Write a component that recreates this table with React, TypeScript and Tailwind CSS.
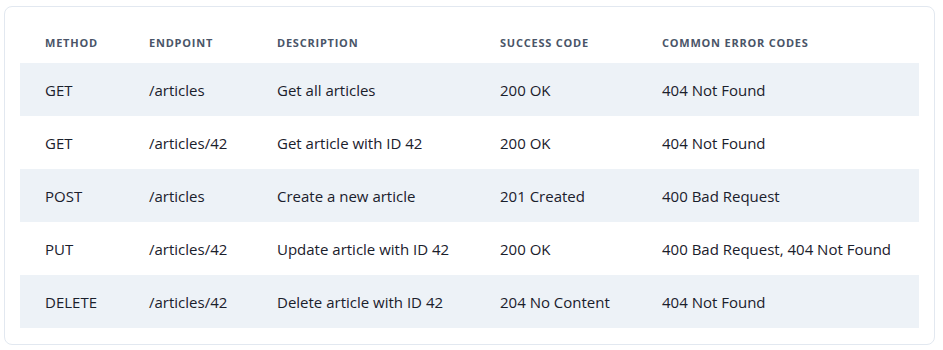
const rows = [
  ["GET", "/articles", "Get all articles", "200 OK", "404 Not Found"],
  ["GET", "/articles/42", "Get article with ID 42", "200 OK", "404 Not Found"],
  ["POST", "/articles", "Create a new article", "201 Created", "400 Bad Request"],
  ["PUT", "/articles/42", "Update article with ID 42", "200 OK", "400 Bad Request, 404 Not Found"],
  ["DELETE", "/articles/42", "Delete article with ID 42", "204 No Content", "404 Not Found"],
];

const headers = ["Method", "Endpoint", "Description", "Success Code", "Common Error Codes"];
const widths = ["w-[104px]", "w-[128px]", "w-[223px]", "w-[162px]", ""];

export default function App() {
  return (
    <div className="bg-white w-[943px] h-[350px] pt-[6px] pl-[4px]" style={{ fontFamily: '"Open Sans", sans-serif' }}>
      <div className="w-[931px] border border-[#e2e8f0] rounded-lg px-[15px] pt-[15px] pb-[16px]">
        <table className="w-full table-fixed border-collapse text-left">
          <thead>
            <tr className="h-[41px]">
              {headers.map((h, i) => (
                <th
                  key={h}
                  className={`${widths[i]} pl-[25px] pr-0 pt-[1px] whitespace-nowrap text-[11px] font-bold uppercase tracking-[0.07em] text-[#4a5568]`}
                >
                  {h}
                </th>
              ))}
            </tr>
          </thead>
          <tbody>
            {rows.map((r, i) => (
              <tr key={i} className={`h-[53px] ${i % 2 === 0 ? "bg-[#edf2f7]" : "bg-white"}`}>
                {r.map((c, j) => (
                  <td key={j} className="pl-[25px] pr-0 pt-[2px] whitespace-nowrap text-[15px] text-[#1a202c]">
                    {c}
                  </td>
                ))}
              </tr>
            ))}
          </tbody>
        </table>
      </div>
    </div>
  );
}
